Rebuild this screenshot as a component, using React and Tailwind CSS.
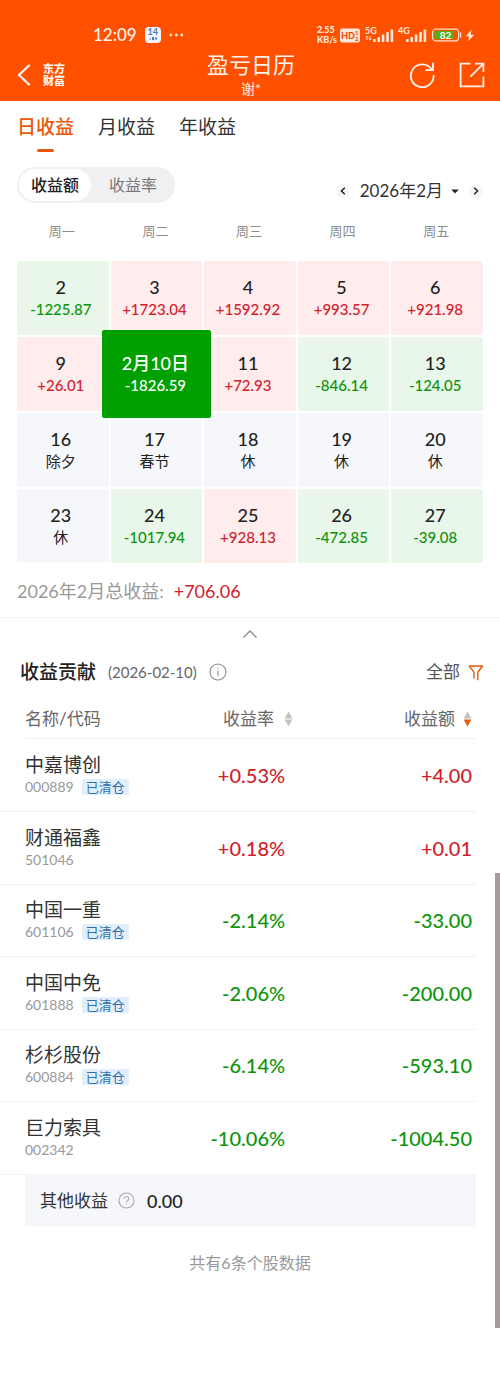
import { useState } from 'react'

const weekdays = ['周一', '周二', '周三', '周四', '周五']

const days = [
  { day: '2', value: '-1225.87' },
  { day: '3', value: '+1723.04' },
  { day: '4', value: '+1592.92' },
  { day: '5', value: '+993.57' },
  { day: '6', value: '+921.98' },
  { day: '9', value: '+26.01' },
  { day: '10', value: '-1826.59' },
  { day: '11', value: '+72.93' },
  { day: '12', value: '-846.14' },
  { day: '13', value: '-124.05' },
  { day: '16', value: '除夕' },
  { day: '17', value: '春节' },
  { day: '18', value: '休' },
  { day: '19', value: '休' },
  { day: '20', value: '休' },
  { day: '23', value: '休' },
  { day: '24', value: '-1017.94' },
  { day: '25', value: '+928.13' },
  { day: '26', value: '-472.85' },
  { day: '27', value: '-39.08' },
]

const stocks = [
  { name: '中嘉博创', code: '000889', closed: true, rate: '+0.53%', amount: '+4.00' },
  { name: '财通福鑫', code: '501046', closed: false, rate: '+0.18%', amount: '+0.01' },
  { name: '中国一重', code: '601106', closed: true, rate: '-2.14%', amount: '-33.00' },
  { name: '中国中免', code: '601888', closed: true, rate: '-2.06%', amount: '-200.00' },
  { name: '杉杉股份', code: '600884', closed: true, rate: '-6.14%', amount: '-593.10' },
  { name: '巨力索具', code: '002342', closed: false, rate: '-10.06%', amount: '-1004.50' },
]

const getCellStyle = (value) => {
  if (value.startsWith('+')) return { bg: 'bg-[#ffecec]', text: 'font-medium text-[#d0222c]' }
  if (value.startsWith('-')) return { bg: 'bg-[#e9f6ea]', text: 'font-medium text-[#0c940c]' }
  return { bg: 'bg-[#f6f7fa]', text: 'text-[#222]' }
}

const getValueColor = (value) => (value.startsWith('+') ? 'text-[#d0222c]' : 'text-[#0c940c]')

// five rising bars under the network label
function Signal({ label, data }) {
  return (
    <svg width="30" height="20" viewBox="0 -2 30 20" fill="#ffe9dc" aria-hidden="true">
      <text x="0" y="7" fontSize="9" fontWeight="700">{label}</text>
      {data && <path d="M2 9v4M0.8 10.4L2 9l1.2 1.4M5 9v4M3.8 11.6L5 13l1.2-1.4" stroke="#ffe9dc" strokeWidth="0.9" fill="none" />}
      <rect x="8" y="12" width="2.6" height="3" rx="0.6" />
      <rect x="12.4" y="10" width="2.6" height="5" rx="0.6" />
      <rect x="16.8" y="7.5" width="2.6" height="7.5" rx="0.6" />
      <rect x="21.2" y="5" width="2.6" height="10" rx="0.6" />
      <rect x="25.6" y="2.5" width="2.6" height="12.5" rx="0.6" />
    </svg>
  )
}

function StatusBar() {
  return (
    <div className="flex h-6 items-center justify-between pr-[25px] pl-[93px]">
      <div className="flex items-center">
        <span className="text-[17px] font-medium">12:09</span>
        <span className="ml-2 flex size-4 flex-col items-center rounded bg-[#f4f6fb] text-[9px] leading-[10px] font-bold text-[#4377c4]">
          14
          <svg width="8" height="3" viewBox="0 0 8 3" fill="#4377c4" aria-hidden="true">
            <path d="M0 2.5L1.5 0.5v2zM3 0h2v3H3zM6 0.5h2v2H6z" />
          </svg>
        </span>
        <svg className="ml-2" width="15" height="4" viewBox="0 0 15 4" fill="#ffe9dc" aria-hidden="true">
          <circle cx="1.8" cy="2" r="1.4" />
          <circle cx="7.3" cy="2" r="1.4" />
          <circle cx="12.8" cy="2" r="1.4" />
        </svg>
      </div>
      <div className="flex items-center gap-[3px] text-[#ffe9dc]">
        <div className="text-[9px] leading-[10px] font-black">
          <p>2.55</p>
          <p>KB/s</p>
        </div>
        <svg width="20" height="15" viewBox="0 0 20 15" aria-hidden="true">
          <rect x="0" y="0.5" width="20" height="14" rx="2" fill="#ffe9dc" />
          <g fill="#f04d08" fontWeight="900">
            <text x="1" y="11" fontSize="9">HD</text>
            <text x="15" y="7" fontSize="6">1</text>
            <text x="15" y="13" fontSize="6">2</text>
          </g>
        </svg>
        <span className="ml-0.5"><Signal label="5G" data /></span>
        <Signal label="4G" />
        <svg width="31" height="14" viewBox="0 0 31 14" aria-hidden="true">
          <rect x="1.6" y="1.2" width="26" height="11.6" rx="3" fill="none" stroke="#ffe0cf" strokeWidth="1.2" />
          <path d="M5 3h18v8H5a1.6 1.6 0 0 1-1.6-1.6V4.6A1.6 1.6 0 0 1 5 3z" fill="#4fae1c" />
          <path d="M29.6 5v4" stroke="#ffe0cf" strokeWidth="1.4" strokeLinecap="round" />
          <text x="14.5" y="10.6" fontSize="10" fontWeight="700" fill="#fff" textAnchor="middle">82</text>
        </svg>
        <svg width="10" height="13" viewBox="0 0 10 13" fill="#ffe9dc" aria-hidden="true">
          <path d="M6.6 0.8L0.6 7.2h3.6L3 12.2l6.2-6.4H5.6z" />
        </svg>
      </div>
    </div>
  )
}

function Header() {
  return (
    <header className="bg-[#ff5000] pt-[23px] text-[#fff3ec]">
      <StatusBar />
      <div className="grid grid-cols-[1fr_auto_1fr] items-center pt-1 pr-[15px] pb-0.5 pl-[17px]">
        <div className="flex items-center">
          <button aria-label="返回" className="block">
            <svg width="14" height="22" viewBox="0 0 14 22" fill="none" stroke="currentColor" strokeWidth="2.4" strokeLinecap="round" strokeLinejoin="round">
              <path d="M12 1.5L2 11l10 9.5" />
            </svg>
          </button>
          <span className="ml-3 text-[11px] leading-3 font-black">东方<br />财富</span>
        </div>
        <div className="text-center">
          <h1 className="text-[22px] leading-7">盈亏日历</h1>
          <p className="text-sm leading-5">谢*</p>
        </div>
        <div className="flex items-center justify-end gap-6">
          <button aria-label="刷新">
            <svg width="26" height="26" viewBox="0 0 26 26" fill="none" stroke="currentColor" strokeWidth="1.8">
              <path d="M22.8 7.6A11.4 11.4 0 1 0 24.6 13" />
              <path d="M24 0.8v7.4h-7.6" />
            </svg>
          </button>
          <button aria-label="分享">
            <svg width="26" height="26" viewBox="0 0 26 26" fill="none" stroke="currentColor" strokeWidth="1.8">
              <path d="M11.5 1.6H1.6v22.8h22.8V14.5" />
              <path d="M16 1.6h8.4V10M24.2 1.8L11.4 14.6" />
            </svg>
          </button>
        </div>
      </div>
    </header>
  )
}

function SortIcon({ down }) {
  return (
    <svg width="9" height="16" viewBox="0 0 9 16" aria-hidden="true">
      <path d="M4.5 0.6L8.4 7.4H0.6z" fill="#c3c3c3" />
      <path d="M4.5 15.4L8.4 8.6H0.6z" fill={down ? '#e8590c' : '#c3c3c3'} />
    </svg>
  )
}

function DayCell({ item, selected, onSelect }) {
  const style = getCellStyle(item.value)
  return (
    <div className="relative h-[74px]">
      {selected ? (
        <button className="absolute -inset-x-[9px] -inset-y-[7px] z-10 flex flex-col items-center justify-center rounded-xs bg-[#00a000] pr-0.5 font-medium text-white">
          <span className="text-lg leading-[22px]">{`2月${item.day}日`}</span>
          <span className="text-[15px] leading-[22px]">{item.value}</span>
        </button>
      ) : (
        <button
          onClick={onSelect}
          className={`flex size-full flex-col items-center justify-center rounded-xs pr-1 ${style.bg}`}
        >
          <span className="text-lg leading-[22px] font-medium text-[#222]">{item.day}</span>
          <span className={`text-[15px] leading-[22px] ${style.text}`}>{item.value}</span>
        </button>
      )}
    </div>
  )
}

function App() {
  const [tab, setTab] = useState('日收益')
  const [mode, setMode] = useState('收益额')
  const [selected, setSelected] = useState('10')

  return (
    <div className="relative min-h-screen bg-white font-['Lato','Noto_Sans_CJK_SC',sans-serif] text-[#222]">
      <Header />

      <section className="border-b border-[#f2f2f2] px-[17px] pt-3 pb-3">
        <nav className="flex gap-6">
          {['日收益', '月收益', '年收益'].map(name => (
            <button key={name} onClick={() => setTab(name)} className="flex flex-col items-center">
              <span className={`text-[19px] leading-7 ${tab === name ? 'font-medium text-[#e8590c]' : 'text-[#333]'}`}>{name}</span>
              {tab === name && <span className="mt-2 h-[3px] w-[17px] rounded-xs bg-[#e8590c]" />}
            </button>
          ))}
        </nav>

        <div className="mt-[15px] flex items-end justify-between">
          <div className="flex h-9 rounded-full bg-[#f0f0f2] p-0.5">
            {['收益额', '收益率'].map(name => (
              <button
                key={name}
                onClick={() => setMode(name)}
                className={`rounded-full text-base ${mode === name ? 'bg-white px-3 font-medium text-[#222]' : 'pr-4 pl-[18px] text-[#777]'}`}
              >
                {name}
              </button>
            ))}
          </div>
          <div className="flex h-6 items-center gap-2.5">
            <button aria-label="上个月" className="flex size-3.5 items-center justify-center rounded-full bg-[#f6f6f6]">
              <svg width="6" height="8" viewBox="0 0 6 8" fill="none" stroke="#222" strokeWidth="1.5"><path d="M4.8 0.8L1.4 4l3.4 3.2" /></svg>
            </button>
            <button className="flex items-center gap-2 text-[17px] leading-6 text-[#333]">
              2026年2月
              <svg width="8" height="5" viewBox="0 0 8 5" fill="#222" aria-hidden="true"><path d="M0.3 0.5h7.4L4 4.6z" /></svg>
            </button>
            <button aria-label="下个月" className="flex size-3.5 items-center justify-center rounded-full bg-[#f6f6f6]">
              <svg width="6" height="8" viewBox="0 0 6 8" fill="none" stroke="#222" strokeWidth="1.5"><path d="M1.2 0.8L4.6 4 1.2 7.2" /></svg>
            </button>
          </div>
        </div>

        <div className="mt-[18px] grid grid-cols-5 gap-0.5 text-center text-[13px] leading-5 text-[#8c8c8c]">
          {weekdays.map(name => <span key={name} className="pr-0.5">{name}</span>)}
        </div>

        <div className="mt-5 grid grid-cols-5 gap-0.5">
          {days.map(item => (
            <DayCell key={item.day} item={item} selected={selected === item.day} onSelect={() => setSelected(item.day)} />
          ))}
        </div>

        <p className="mt-3.5 flex gap-2.5 text-lg leading-7 text-[#999]">
          <span>2026年2月总收益:</span>
          <span className="text-[#d0222c]">+706.06</span>
        </p>
      </section>

      <button aria-label="收起" className="flex h-8 w-full items-center justify-center">
        <svg width="16" height="10" viewBox="0 0 16 10" fill="none" stroke="#888" strokeWidth="1.3"><path d="M1.5 8.5L8 2l6.5 6.5" /></svg>
      </button>

      <section>
        <div className="flex h-11 items-center pr-4 pl-5">
          <h2 className="text-[19px] leading-7 font-medium">收益贡献</h2>
          <span className="ml-3 text-[15px] text-[#666]">(2026-02-10)</span>
          <button aria-label="说明" className="ml-3">
            <svg width="18" height="18" viewBox="0 0 18 18" fill="none" stroke="#888" strokeWidth="1.1">
              <circle cx="9" cy="9" r="8" />
              <path d="M9 7.6v5.2" />
              <circle cx="9" cy="5.3" r="0.6" fill="#888" stroke="none" />
            </svg>
          </button>
          <button className="ml-auto flex items-center gap-2 text-[17px] leading-6 text-[#555]">
            全部
            <svg width="16" height="17" viewBox="0 0 16 17" fill="none" stroke="#e8590c" strokeWidth="1.4" strokeLinejoin="round" aria-hidden="true">
              <path d="M5.9 14.4V8.2L1.2 2h13.4L9.8 8.2v8" />
            </svg>
          </button>
        </div>

        <div className="mr-6">
          <table className="w-full table-fixed">
            <thead>
              <tr className="h-[45px] text-[17px] leading-6 text-[#666]">
                <th className="w-[35%] pl-[25px] text-left font-normal">
                  <div className="flex h-[45px] items-center border-b border-[#f0f0f0] pt-1.5">名称/代码</div>
                </th>
                <th className="w-[27%] font-normal">
                  <button className="flex h-[45px] w-full items-center justify-end gap-2.5 border-b border-[#f0f0f0] pt-1.5 pr-0.5">收益率<SortIcon /></button>
                </th>
                <th className="w-[38%] font-normal">
                  <button className="flex h-[45px] w-full items-center justify-end gap-2 border-b border-[#f0f0f0] pt-1.5 pr-1">收益额<SortIcon down /></button>
                </th>
              </tr>
            </thead>
            <tbody>
              {stocks.map(stock => (
                <tr key={stock.code} className="h-[73px] border-b border-[#f2f2f2] odd:h-[72px]">
                  <td className="pl-[25px]">
                    <p className="text-[19px] leading-6 text-[#333]">{stock.name}</p>
                    <div className="flex h-5 items-center gap-2 text-sm text-[#999]">
                      {stock.code}
                      {stock.closed && <span className="rounded-xs bg-[#e2effa] px-1 text-[13px] leading-4 text-[#2a6fb0]">已清仓</span>}
                    </div>
                  </td>
                  <td className={`pr-2.5 text-right text-xl font-medium ${getValueColor(stock.rate)}`}>{stock.rate}</td>
                  <td className={`pr-1 text-right text-xl font-medium ${getValueColor(stock.amount)}`}>{stock.amount}</td>
                </tr>
              ))}
            </tbody>
          </table>

          <div className="ml-[25px] flex h-[52px] items-center bg-[#f6f7fa] pl-[15px] text-[17px] text-[#333]">
            其他收益
            <button aria-label="其他收益说明" className="ml-2.5">
              <svg width="17" height="17" viewBox="0 0 17 17" fill="none" stroke="#aaa" strokeWidth="1.1">
                <circle cx="8.5" cy="8.5" r="7.5" />
                <path d="M6.3 6.8a2.2 2.2 0 1 1 3.4 1.8c-.8.5-1.2.8-1.2 1.7" />
                <circle cx="8.5" cy="12.2" r="0.6" fill="#aaa" stroke="none" />
              </svg>
            </button>
            <span className="ml-3 text-lg font-medium text-[#222]">0.00</span>
          </div>
        </div>

        <p className="mt-6 text-center text-base leading-6 text-[#999]">共有6条个股数据</p>
      </section>

      <div className="absolute top-[873px] right-0 h-[455px] w-[5px] bg-[#a39c98]" />
    </div>
  )
}

export default App
